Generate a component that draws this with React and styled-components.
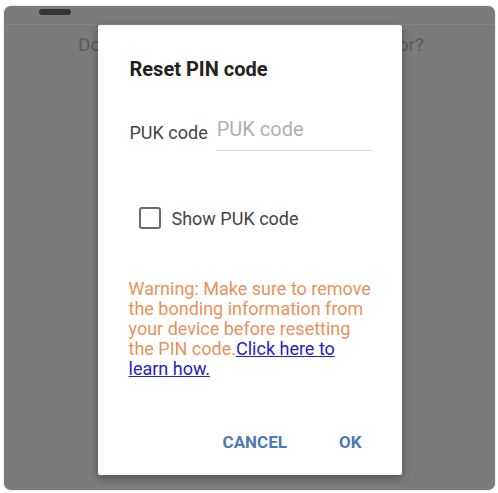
import React from 'react'
import styled, { createGlobalStyle } from 'styled-components'

const GlobalStyle = createGlobalStyle`
  html, body {
    margin: 0;
    padding: 0;
    background: #fff;
  }
  body {
    font-family: Roboto, "Liberation Sans", Arial, sans-serif;
  }
`

const App = () => {
  return (
    <>
      <GlobalStyle />
      <Page>
        <Screen>
          <StatusBar>
            <Notch />
          </StatusBar>
          <Behind>Do you want to reset PIN of this monitor?</Behind>

          <Overlay>
            <Dialog>
              <Title>Reset PIN code</Title>

              <FieldRow>
                <FieldLabel>PUK code</FieldLabel>
                <Input placeholder="PUK code" />
              </FieldRow>

              <CheckRow>
                <Box />
                <CheckLabel>Show PUK code</CheckLabel>
              </CheckRow>

              <Warning>
                Warning: Make sure to remove the bonding information from your device before resetting the PIN code.
                <Link href="#">Click here to learn how.</Link>
              </Warning>

              <Actions>
                <Button>CANCEL</Button>
                <Button>OK</Button>
              </Actions>
            </Dialog>
          </Overlay>
        </Screen>
      </Page>
    </>
  )
}

const Page = styled.div`
  width: 498px;
  height: 493px;
  padding: 6px 3px 3px 4px;
  box-sizing: border-box;
`

const Screen = styled.div`
  position: relative;
  height: 484px;
  background: #7b7b7b;
  border-radius: 7px;
  box-shadow: 0 0 2px rgba(0, 0, 0, 0.25);
  overflow: hidden;
`

const StatusBar = styled.div`
  height: 19px;
  padding: 3px 0 0 35px;
  box-sizing: border-box;
  border-bottom: 1px solid #858585;
`

const Notch = styled.div`
  width: 32px;
  height: 6px;
  border-radius: 3px;
  background: #333;
`

const Behind = styled.div`
  margin: 8px 0 0 74px;
  font-size: 19px;
  color: #5c5c5c;
  white-space: nowrap;
`

const Overlay = styled.div`
  position: absolute;
  inset: 0;
  display: flex;
  align-items: center;
  justify-content: center;
  padding-top: 4px;
`

const Dialog = styled.div`
  width: 304px;
  height: 450px;
  box-sizing: border-box;
  background: #fff;
  border-radius: 2px;
  box-shadow: 0 3px 10px rgba(0, 0, 0, 0.35);
  padding: 32px 32px 0 32px;
  display: flex;
  flex-direction: column;
`

const Title = styled.div`
  font-size: 20px;
  line-height: 24px;
  font-weight: 700;
  color: #222;
`

const FieldRow = styled.div`
  display: flex;
  align-items: flex-end;
  margin-top: 35px;
  gap: 9px;
`

const FieldLabel = styled.div`
  font-size: 18px;
  line-height: 24px;
  color: #444;
  padding-bottom: 6px;
  white-space: nowrap;
`

const Input = styled.input`
  width: 155px;
  border: none;
  border-bottom: 1px solid #d6d6d6;
  outline: none;
  padding: 0 0 8px 0;
  font-family: Roboto, "Liberation Sans", Arial, sans-serif;
  font-size: 20px;
  line-height: 26px;
  color: #333;
  background: transparent;

  &::placeholder {
    color: #b0b0b0;
  }
`

const CheckRow = styled.div`
  display: flex;
  align-items: center;
  margin: 56px 0 0 9px;
  gap: 11px;
`

const Box = styled.span`
  width: 22px;
  height: 22px;
  border: 2px solid #6a6a6a;
  border-radius: 3px;
  box-sizing: border-box;
`

const CheckLabel = styled.span`
  font-size: 18px;
  line-height: 21px;
  color: #444;
`

const Warning = styled.div`
  margin: 50px -7px 0 -1px;
  font-size: 18px;
  line-height: 20px;
  color: #ea925c;
`

const Link = styled.a`
  color: #2323c8;
  text-decoration: underline;
`

const Actions = styled.div`
  margin-top: auto;
  margin-bottom: 15px;
  display: flex;
  justify-content: flex-end;
  gap: 36px;
`

const Button = styled.button`
  border: none;
  background: none;
  padding: 8px;
  font-family: Roboto, "Liberation Sans", Arial, sans-serif;
  font-size: 17px;
  font-weight: 700;
  color: #4a7bb2;
  cursor: pointer;
`

export default App
